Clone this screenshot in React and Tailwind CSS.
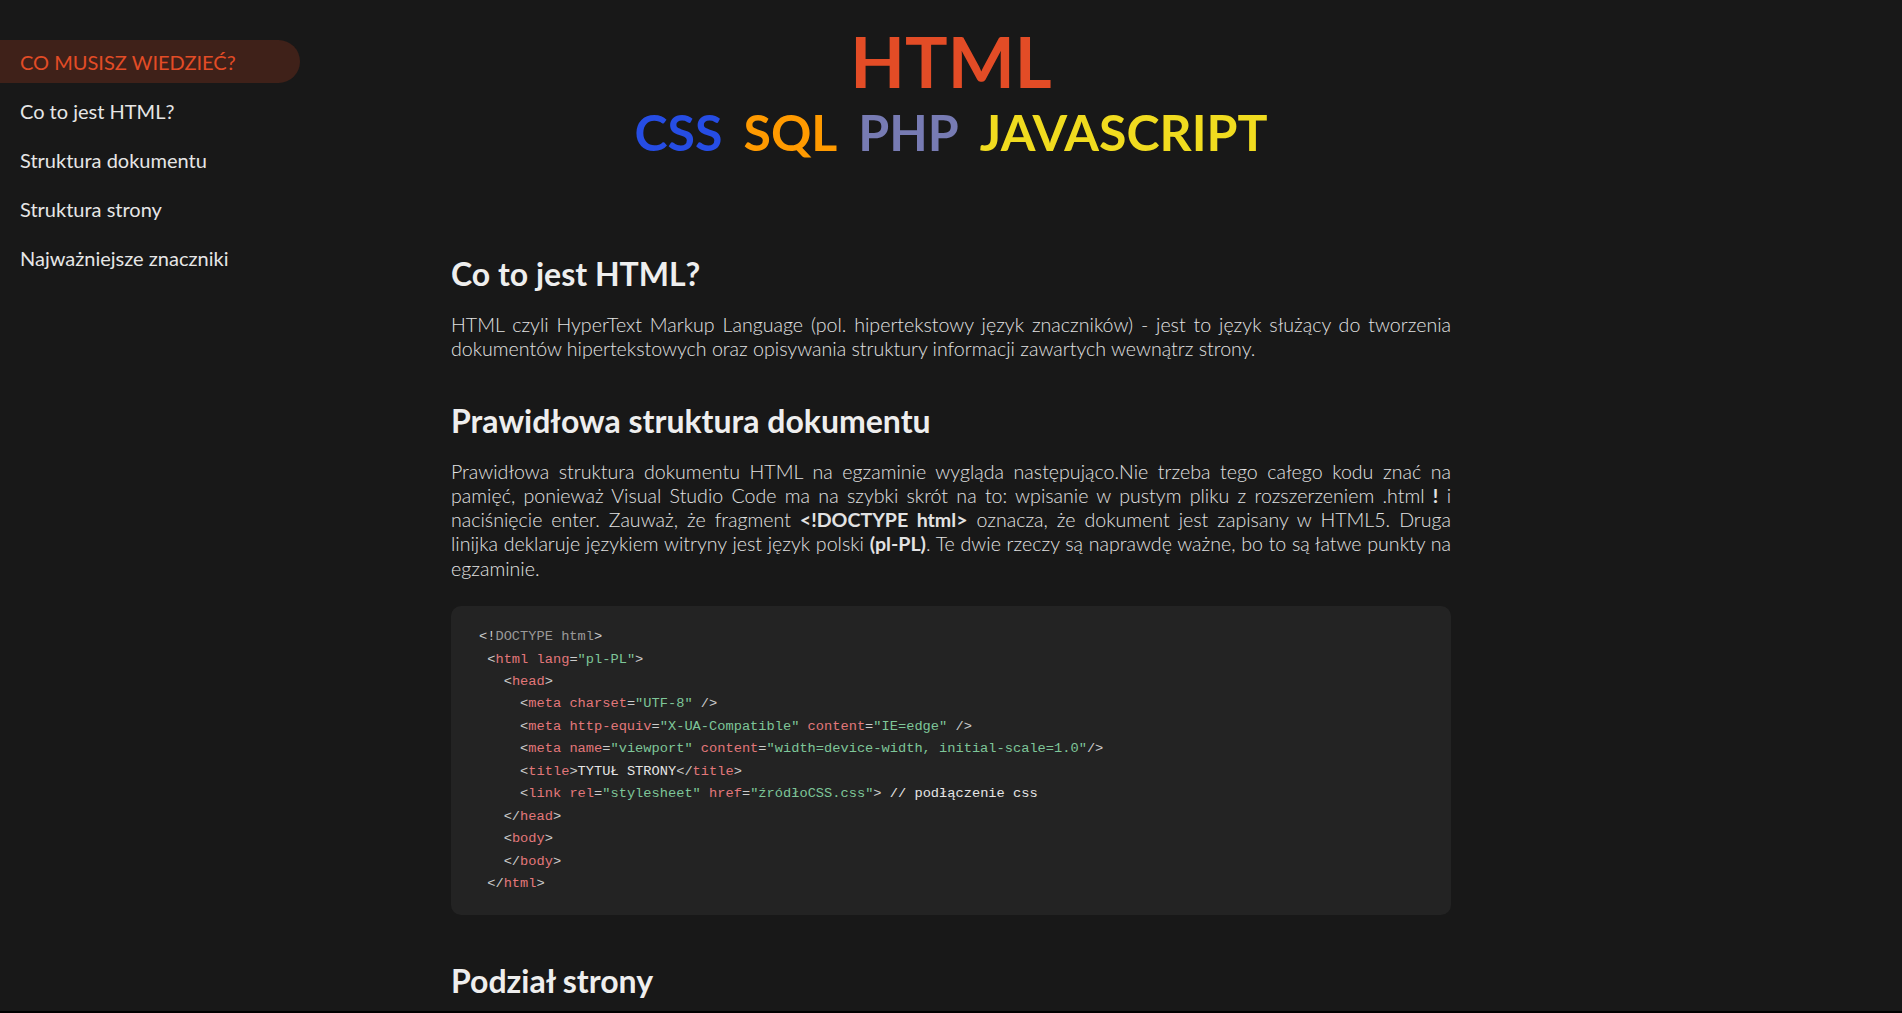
import React from 'react'

const nav = ['Co to jest HTML?', 'Struktura dokumentu', 'Struktura strony', 'Najważniejsze znaczniki']

const T = ({ children }) => <span className="text-[#e2777a]">{children}</span>
const S = ({ children }) => <span className="text-[#7ec699]">{children}</span>
const P = ({ children }) => <span className="text-[#cccccc]">{children}</span>

function Tag({ name, close, children, end = '>' }) {
  return (
    <>
      <P>{close ? '</' : '<'}</P>
      <T>{name}</T>
      {children}
      <P>{end}</P>
    </>
  )
}

function Attr({ name, value }) {
  return (
    <>
      {' '}
      <T>{name}</T>
      <P>=</P>
      <S>"{value}"</S>
    </>
  )
}

function CodeBlock() {
  return (
    <pre className="mt-[25px] rounded-[10px] bg-[#232323] pl-[28px] pr-6 pt-[20px] pb-[19px] font-['Liberation_Mono',monospace] text-[13.7px] leading-[22.45px] text-[#cccccc]">
      <div>
        <P>{'<!'}</P>
        <span className="text-[#999999]">DOCTYPE html</span>
        <P>{'>'}</P>
      </div>
      <div>
        {' '}
        <Tag name="html">
          <Attr name="lang" value="pl-PL" />
        </Tag>
      </div>
      <div>
        {'   '}
        <Tag name="head" />
      </div>
      <div>
        {'     '}
        <Tag name="meta" end=" />">
          <Attr name="charset" value="UTF-8" />
        </Tag>
      </div>
      <div>
        {'     '}
        <Tag name="meta" end=" />">
          <Attr name="http-equiv" value="X-UA-Compatible" />
          <Attr name="content" value="IE=edge" />
        </Tag>
      </div>
      <div>
        {'     '}
        <Tag name="meta" end="/>">
          <Attr name="name" value="viewport" />
          <Attr name="content" value="width=device-width, initial-scale=1.0" />
        </Tag>
      </div>
      <div>
        {'     '}
        <Tag name="title" />
        <span className="text-[#e6e6e6]">TYTUŁ STRONY</span>
        <Tag name="title" close />
      </div>
      <div>
        {'     '}
        <Tag name="link">
          <Attr name="rel" value="stylesheet" />
          <Attr name="href" value="źródłoCSS.css" />
        </Tag>
        <span className="text-[#e6e6e6]">{' // podłączenie css'}</span>
      </div>
      <div>
        {'   '}
        <Tag name="head" close />
      </div>
      <div>
        {'   '}
        <Tag name="body" />
      </div>
      <div>
        {'   '}
        <Tag name="body" close />
      </div>
      <div>
        {' '}
        <Tag name="html" close />
      </div>
    </pre>
  )
}

export default function App() {
  return (
    <div className="h-screen overflow-hidden border-b-2 border-black bg-[#181818] font-['Lato',sans-serif]">
      <div className="grid grid-cols-[300px_1fr_300px]">
        <aside className="flex flex-col gap-[6px] pt-[40px]">
          <div className="flex h-[43px] items-center rounded-r-full bg-[#3f2119] pl-5 text-[20px] text-[#e34c26]">
            CO MUSISZ WIEDZIEĆ?
          </div>
          {nav.map((item) => (
            <div key={item} className="flex h-[43px] items-center pl-5 text-[20px] text-[#e6e6e6]">
              {item}
            </div>
          ))}
        </aside>

        <main className="flex flex-col items-center">
          <header className="flex flex-col items-center pt-[25px]">
            <h1 className="text-[71px] font-bold leading-none text-[#e34c26]">HTML</h1>
            <div className="mt-[11px] flex gap-[21px] text-[50px] font-bold leading-none">
              <span className="text-[#264de4]">CSS</span>
              <span className="text-[#ff9a00]">SQL</span>
              <span className="text-[#777bb3]">PHP</span>
              <span className="text-[#f0db1f]">JAVASCRIPT</span>
            </div>
          </header>

          <article className="mt-[98px] w-[1000px]">
            <h2 className="text-[32px] font-bold leading-[38px] text-[#eeeeee]">Co to jest HTML?</h2>
            <p className="mt-[20px] text-justify text-[19.6px] font-light leading-[24.3px] text-[#e2e2e2]">
              HTML czyli HyperText Markup Language (pol. hipertekstowy język znaczników) - jest to język służący do tworzenia dokumentów hipertekstowych oraz opisywania struktury informacji zawartych wewnątrz strony.
            </p>

            <h2 className="mt-[40px] text-[32px] font-bold leading-[38px] text-[#eeeeee]">Prawidłowa struktura dokumentu</h2>
            <p className="mt-[20px] text-justify text-[19.6px] font-light leading-[24.3px] text-[#e2e2e2]">
              Prawidłowa struktura dokumentu HTML na egzaminie wygląda następująco.Nie trzeba tego całego kodu znać na pamięć, ponieważ Visual Studio Code ma na szybki skrót na to: wpisanie w pustym pliku z rozszerzeniem .html <b className="font-bold">!</b> i naciśnięcie enter. Zauważ, że fragment <b className="font-bold">&lt;!DOCTYPE html&gt;</b> oznacza, że dokument jest zapisany w HTML5. Druga linijka deklaruje językiem witryny jest język polski <b className="font-bold">(pl-PL)</b>. Te dwie rzeczy są naprawdę ważne, bo to są łatwe punkty na egzaminie.
            </p>

            <CodeBlock />

            <h2 className="mt-[47px] text-[32px] font-bold leading-[38px] text-[#eeeeee]">Podział strony</h2>
          </article>
        </main>
        <div />
      </div>
    </div>
  )
}
